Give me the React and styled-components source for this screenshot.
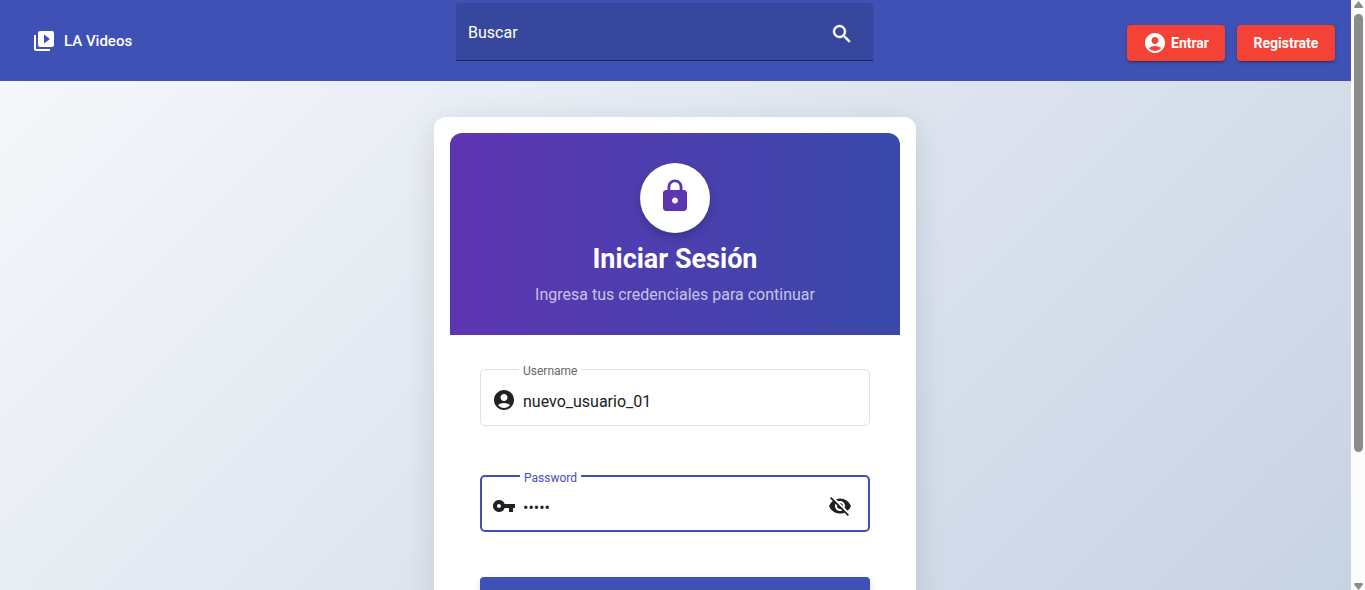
import React from "react";
import styled, { createGlobalStyle } from "styled-components";
import {
  MdVideoLibrary,
  MdAccountCircle,
  MdLock,
  MdVpnKey,
  MdVisibilityOff,
} from "react-icons/md";

const GlobalStyle = createGlobalStyle`
  *, *::before, *::after { box-sizing: border-box; }
  body {
    margin: 0;
    overflow: hidden;
    font-family: Roboto, "Liberation Sans", sans-serif;
    font-size: 16px;
    color: #212121;
  }
  button, input { font-family: inherit; }
`;

const Shell = styled.div`
  display: flex;
  height: 100vh;
  overflow: hidden;
`;

const Page = styled.div`
  flex: 1;
  min-width: 0;
  display: flex;
  flex-direction: column;
  overflow-y: auto;
  scrollbar-width: none;
`;

const Toolbar = styled.header`
  display: flex;
  flex: none;
  align-items: flex-start;
  justify-content: space-between;
  height: 81px;
  padding: 0 16px;
  background: #3f51b5;
  color: #fff;
`;

const Brand = styled.a`
  display: flex;
  align-items: center;
  gap: 8px;
  min-width: 186px;
  margin-top: 29px;
  padding: 0 16px;
  color: inherit;
  font-size: 15px;
  font-weight: 500;
  line-height: 24px;
  text-decoration: none;
`;

const SearchBox = styled.div`
  display: flex;
  align-items: center;
  flex: 0 1 417px;
  height: 58px;
  margin-top: 3px;
  padding: 4px 19px 0 12px;
  background: #38479e;
  border-bottom: 1px solid #20295b;
  border-radius: 4px 4px 0 0;
`;

const SearchInput = styled.input`
  flex: 1;
  min-width: 0;
  padding: 0 0 2px;
  border: 0;
  outline: 0;
  background: transparent;
  color: #fff;
  font-size: 16px;
  line-height: 24px;
  &::placeholder { color: #fff; opacity: 1; }
`;

const IconButton = styled.button`
  display: flex;
  align-items: center;
  justify-content: center;
  flex: none;
  width: ${(p) => p.$size}px;
  height: ${(p) => p.$size}px;
  padding: 0;
  border: 0;
  background: transparent;
  color: inherit;
  cursor: pointer;
`;

const SearchIcon = styled.svg`
  width: 24px;
  height: 24px;
  fill: currentColor;
  stroke: currentColor;
  stroke-width: 0.4px;
`;

const Actions = styled.nav`
  display: flex;
  gap: 12px;
  margin-top: 25px;
`;

const RaisedButton = styled.button`
  display: flex;
  align-items: center;
  justify-content: center;
  gap: 4px;
  min-width: 98px;
  height: 36px;
  padding: 0 15px;
  border: 0;
  border-radius: 4px;
  background: #f44336;
  color: #fff;
  font-size: 14px;
  font-weight: 700;
  line-height: 36px;
  box-shadow: 0 3px 1px -2px rgba(0, 0, 0, 0.2), 0 2px 2px rgba(0, 0, 0, 0.14), 0 1px 5px rgba(0, 0, 0, 0.12);
  cursor: pointer;
`;

const Backdrop = styled.main`
  display: flex;
  flex: none;
  align-items: flex-start;
  justify-content: center;
  min-height: 676px;
  padding: 36px 17px 36px 16px;
  background: linear-gradient(135deg, #f5f7fa 0%, #c3cfe2 100%);
`;

const Card = styled.section`
  width: 100%;
  max-width: 482px;
  padding: 16px;
  border-radius: 12px;
  background: #fff;
  box-shadow: 0 8px 32px rgba(0, 0, 0, 0.12);
`;

const CardHeader = styled.div`
  display: flex;
  flex-direction: column;
  align-items: center;
  padding: 30px 30px 28px;
  border-radius: 12px 12px 0 0;
  background: linear-gradient(90deg, #5e35b1, #3949ab);
  color: #fff;
  text-align: center;
`;

const Avatar = styled.div`
  display: flex;
  align-items: center;
  justify-content: center;
  width: 70px;
  height: 70px;
  padding-bottom: 4px;
  border-radius: 50%;
  background: #fff;
  color: #5e35b1;
  box-shadow: 0 4px 8px rgba(0, 0, 0, 0.2);
`;

const Title = styled.h1`
  margin: 10px 0 0;
  font-size: 27px;
  font-weight: 700;
  line-height: 32px;
`;

const Subtitle = styled.p`
  margin: 8px 0 0;
  color: rgba(255, 255, 255, 0.7);
  font-size: 16px;
  line-height: 24px;
`;

const Form = styled.form`
  display: flex;
  flex-direction: column;
  padding: 34px 30px 30px;
`;

const Field = styled.div`
  position: relative;
  display: flex;
  align-items: center;
  gap: 7px;
  height: 57px;
  margin-bottom: ${(p) => (p.$last ? 45 : 49)}px;
  padding: 4px 8px 0 ${(p) => (p.$active ? 10 : 11)}px;
  border: ${(p) => (p.$active ? "2px solid #3f51b5" : "1px solid #e0e0e0")};
  border-radius: 5px;
  > svg { flex: none; }
`;

const FieldLabel = styled.label`
  position: absolute;
  top: -8px;
  left: 38px;
  padding: 0 4px;
  background: #fff;
  color: ${(p) => (p.$active ? "#3f51b5" : "#666")};
  font-size: 12px;
  line-height: 18px;
`;

const FieldInput = styled.input`
  flex: 1;
  min-width: 0;
  padding: 4px 0 0;
  border: 0;
  outline: 0;
  background: transparent;
  color: #212121;
  font-size: 16px;
  line-height: 20px;
`;

const Submit = styled.button`
  height: 56px;
  border: 0;
  border-radius: 4px;
  background: #3f51b5;
  color: #fff;
  font-size: 16px;
  font-weight: 500;
  box-shadow: 0 4px 8px rgba(0, 0, 0, 0.12);
  cursor: pointer;
`;

const ScrollTrack = styled.div`
  display: flex;
  flex: none;
  flex-direction: column;
  align-items: center;
  width: 14px;
  padding: 1px 0 0;
  background: #fcfcfc;
`;

const ScrollArrow = styled.svg`
  flex: none;
  display: block;
  width: 9px;
  height: 7px;
  fill: #8b8b8b;
`;

const ScrollSpace = styled.div`
  display: flex;
  flex: 1;
  justify-content: center;
  padding-top: 6px;
`;

const ScrollThumb = styled.div`
  width: 9px;
  height: 77%;
  border-radius: 5px;
  background: #8b8b8b;
`;

export default function App() {
  return (
    <Shell>
      <GlobalStyle />
      <Page>
        <Toolbar>
          <Brand href="#">
            <MdVideoLibrary size={24} />
            LA Videos
          </Brand>
          <SearchBox role="search">
            <SearchInput type="text" placeholder="Buscar" aria-label="Buscar" />
            <IconButton type="button" $size={24} aria-label="Buscar">
              <SearchIcon viewBox="0 0 24 24" aria-hidden="true">
                <path d="M15.5 14h-.79l-.28-.27A6.471 6.471 0 0 0 16 9.5 6.5 6.5 0 1 0 9.5 16c1.61 0 3.09-.59 4.23-1.57l.27.28v.79l5 4.99L20.49 19l-4.99-5zm-6 0C7.01 14 5 11.99 5 9.5S7.01 5 9.5 5 14 7.01 14 9.5 11.99 14 9.5 14z" />
              </SearchIcon>
            </IconButton>
          </SearchBox>
          <Actions>
            <RaisedButton type="button">
              <MdAccountCircle size={24} />
              Entrar
            </RaisedButton>
            <RaisedButton type="button">Registrate</RaisedButton>
          </Actions>
        </Toolbar>
        <Backdrop>
          <Card>
            <CardHeader>
              <Avatar>
                <MdLock size={36} />
              </Avatar>
              <Title>Iniciar Sesión</Title>
              <Subtitle>Ingresa tus credenciales para continuar</Subtitle>
            </CardHeader>
            <Form>
              <Field>
                <FieldLabel htmlFor="username">Username</FieldLabel>
                <MdAccountCircle size={24} />
                <FieldInput id="username" type="text" defaultValue="nuevo_usuario_01" />
              </Field>
              <Field $active $last>
                <FieldLabel htmlFor="password" $active>Password</FieldLabel>
                <MdVpnKey size={24} />
                <FieldInput id="password" type="password" defaultValue="12345" />
                <IconButton type="button" $size={40} aria-label="Password">
                  <MdVisibilityOff size={24} />
                </IconButton>
              </Field>
              <Submit type="submit">Iniciar Sesión</Submit>
            </Form>
          </Card>
        </Backdrop>
      </Page>
      <ScrollTrack aria-hidden="true">
        <ScrollArrow viewBox="0 0 9 7">
          <path d="M4.5 0 L9 5.5 Q9 7 8 7 H1 Q0 7 0 5.5 Z" />
        </ScrollArrow>
        <ScrollSpace>
          <ScrollThumb />
        </ScrollSpace>
        <ScrollArrow viewBox="0 0 9 7">
          <path d="M4.5 7 L9 1.5 Q9 0 8 0 H1 Q0 0 0 1.5 Z" />
        </ScrollArrow>
      </ScrollTrack>
    </Shell>
  );
}
